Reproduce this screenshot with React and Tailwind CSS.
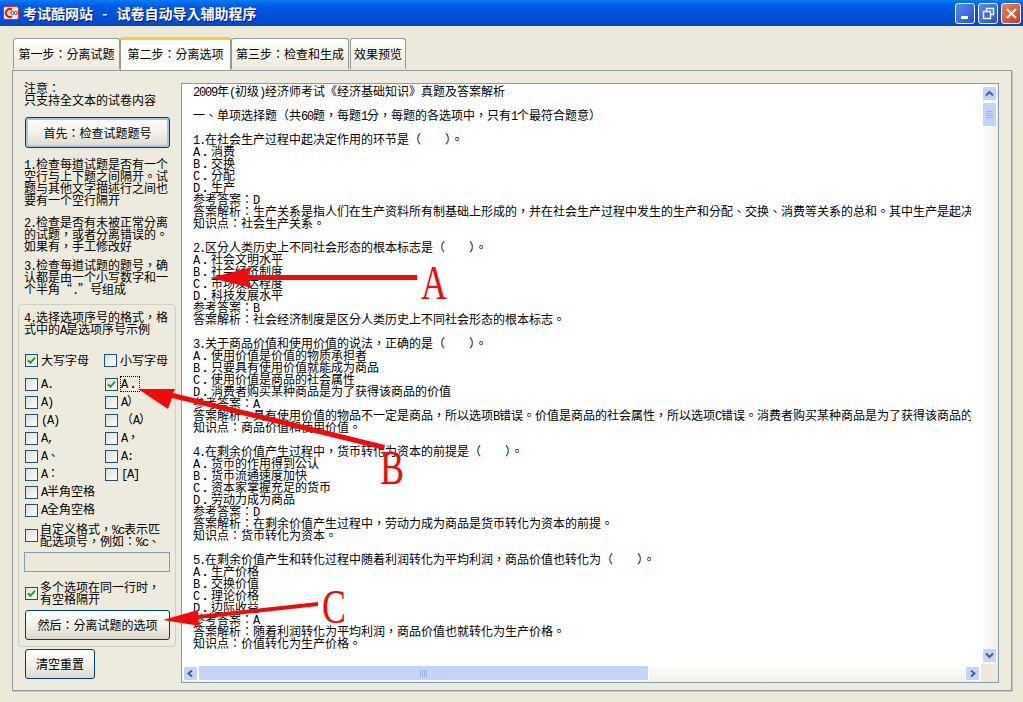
import React from "react";

const T = ({ children }) => {
  const parts = String(children).split(/([A-Za-z0-9.,:()\[\]%" -]+|\uFF0E)/);
  return (
    <>
      {parts.map((p, i) =>
        i % 2 === 0 ? (
          p
        ) : p === "\uFF0E" ? (
          <span key={i} className="inline-block w-[12px] text-center font-['Liberation_Mono',monospace] text-[12px] font-bold">.</span>
        ) : (
          <span key={i} className="font-['Liberation_Mono',monospace] text-[12px] tracking-[-1.2px]">{p}</span>
        )
      )}
    </>
  );
};

// fullwidth punctuation used by the original text
const fw = (s) =>
  s
    .replace(/^([A-D])\./, "$1\uFF0E")
    .replace(/:/g, "\uFF1A")
    .replace(/,/g, "\uFF0C")
    .replace(/\(    \)/g, "\uFF08    \uFF09");

const Lines = ({ items, className = "" }) => (
  <div className={className}>
    {items.map((l, i) => (
      <div key={i} className="h-[12px] whitespace-pre leading-[12px]">
        <T>{fw(l)}</T>
      </div>
    ))}
  </div>
);

const content = [
  "2009年(初级)经济师考试《经济基础知识》真题及答案解析",
  "",
  "一、单项选择题\uFF08共60题,每题1分,每题的各选项中,只有1个最符合题意\uFF09",
  "",
  "1.在社会生产过程中起决定作用的环节是(    )。",
  "A.消费",
  "B.交换",
  "C.分配",
  "D.生产",
  "参考答案:D",
  "答案解析:生产关系是指人们在生产资料所有制基础上形成的,并在社会生产过程中发生的生产和分配、交换、消费等关系的总和。其中生产是起决定作用的环节。",
  "知识点:社会生产关系。",
  "",
  "2.区分人类历史上不同社会形态的根本标志是(    )。",
  "A.社会文明水平",
  "B.社会经济制度",
  "C.市场发达程度",
  "D.科技发展水平",
  "参考答案:B",
  "答案解析:社会经济制度是区分人类历史上不同社会形态的根本标志。",
  "",
  "3.关于商品价值和使用价值的说法,正确的是(    )。",
  "A.使用价值是价值的物质承担者",
  "B.只要具有使用价值就能成为商品",
  "C.使用价值是商品的社会属性",
  "D.消费者购买某种商品是为了获得该商品的价值",
  "参考答案:A",
  "答案解析:具有使用价值的物品不一定是商品,所以选项B错误。价值是商品的社会属性,所以选项C错误。消费者购买某种商品是为了获得该商品的使用价值。",
  "知识点:商品价值和使用价值。",
  "",
  "4.在剩余价值产生过程中,货币转化为资本的前提是(    )。",
  "A.货币的作用得到公认",
  "B.货币流通速度加快",
  "C.资本家掌握充足的货币",
  "D.劳动力成为商品",
  "参考答案:D",
  "答案解析:在剩余价值产生过程中,劳动力成为商品是货币转化为资本的前提。",
  "知识点:货币转化为资本。",
  "",
  "5.在剩余价值产生和转化过程中随着利润转化为平均利润,商品价值也转化为(    )。",
  "A.生产价格",
  "B.交换价值",
  "C.理论价格",
  "D.边际收益",
  "参考答案:A",
  "答案解析:随着利润转化为平均利润,商品价值也就转化为生产价格。",
  "知识点:价值转化为生产价格。",
];

const Box = ({ checked }) => (
  <span className="flex h-[13px] w-[13px] shrink-0 items-center justify-center border border-[#1c5180] bg-gradient-to-br from-[#dcdcd7] to-white">
    {checked && (
      <svg width="9" height="9" viewBox="0 0 9 9">
        <path d="M1 4.2 L3.5 6.8 L8 1.6" fill="none" stroke="#21a121" strokeWidth="2" />
      </svg>
    )}
  </span>
);

const Check = ({ label, checked, focus }) => (
  <div className="flex h-[18px] items-center gap-[2px]">
    <Box checked={checked} />
    <span className={focus ? "border border-dotted border-black leading-[12px]" : "pl-px leading-[12px]"}>
      <T>{label}</T>
    </span>
  </div>
);

const XpButton = ({ children, className = "" }) => (
  <div
    className={
      "flex items-center justify-center rounded-[3px] border border-[#003c74] bg-gradient-to-b from-white via-[#f2f1ea] to-[#dcd8cc] " +
      className
    }
  >
    {children}
  </div>
);

const Tab = ({ children, active, className = "" }) =>
  active ? (
    <div
      className={
        "relative z-10 -mb-px flex h-[33px] items-center justify-center rounded-t-[3px] border-x border-[#919b9c] border-t-[3px] border-t-[#ffc73c] bg-[#fcfcfa] pb-[3px] " +
        className
      }
    >
      {children}
    </div>
  ) : (
    <div
      className={
        "mt-px flex h-[31px] items-center justify-center rounded-t-[3px] border-x border-t border-[#919b9c] bg-gradient-to-b from-white to-[#ece9d8] " +
        className
      }
    >
      {children}
    </div>
  );

const ScrollBtn = ({ d, className = "" }) => (
  <div
    className={
      "flex h-[15px] w-[15px] shrink-0 items-center justify-center rounded-[2px] border border-white bg-[#c3d3fa] " +
      className
    }
  >
    <svg width="9" height="7" viewBox="0 0 9 7">
      <path d={d} fill="none" stroke="#4d6185" strokeWidth="2" />
    </svg>
  </div>
);

const WinBtn = ({ className = "", children }) => (
  <div
    className={
      "flex h-[21px] w-[20px] items-center justify-center rounded-[3px] border border-white " + className
    }
  >
    <svg width="15" height="15" viewBox="0 0 15 15">{children}</svg>
  </div>
);

export default function App() {
  return (
    <div className="relative flex h-[702px] w-[1023px] flex-col overflow-hidden bg-[#ece9d8] font-['Noto_Sans_CJK_TC','Noto_Sans_CJK_SC',sans-serif] text-[12px] leading-[12px] text-black">
      {/* title bar */}
      <div className="flex h-[26px] shrink-0 items-center bg-gradient-to-b from-[#0a7cf2] via-[#0058e6] via-25% to-[#0348c8] pl-[3px] pr-[2px]">
        <svg width="16" height="16" viewBox="0 0 16 16" className="mr-[4px] shrink-0">
          <rect x="0.5" y="1.5" width="15" height="13" rx="2" fill="#f3e6dc" stroke="#c9342a" />
          <path d="M9 4.6A4 4 0 1 0 9 11.4" fill="none" stroke="#d6201c" strokeWidth="2" />
          <circle cx="9.5" cy="8" r="1.6" fill="none" stroke="#7a4a4a" strokeWidth="1" />
          <circle cx="12.8" cy="8" r="1.6" fill="none" stroke="#7a4a4a" strokeWidth="1" />
        </svg>
        <span className="whitespace-pre text-[14px] font-bold text-white [text-shadow:1px_1px_#0f1089]">
          考试酷网站 <span className="mx-[6px]">-</span> 试卷自动导入辅助程序
        </span>
        <div className="ml-auto flex gap-[3px]">
          <WinBtn className="bg-gradient-to-br from-[#5a8af0] to-[#2a50d0]">
            <rect x="3" y="10" width="7" height="3" fill="white" />
          </WinBtn>
          <WinBtn className="bg-gradient-to-br from-[#5a8af0] to-[#2a50d0]">
            <path d="M5.5 5.5V2.5H12.5V8.5H10M2.5 5.5H9.5V12.5H2.5Z" fill="none" stroke="white" strokeWidth="1.4" />
          </WinBtn>
          <WinBtn className="bg-gradient-to-br from-[#e8835f] to-[#c63a18]">
            <path d="M3 3L12 12M12 3L3 12" stroke="white" strokeWidth="2" />
          </WinBtn>
        </div>
      </div>

      {/* client */}
      <div className="flex flex-1 flex-col pl-[12px] pr-[11px] pt-[11px]">
        <div className="flex h-[33px] shrink-0 items-start pl-px">
          <Tab className="w-[107px]">第一步{"\uFF1A"}分离试题</Tab>
          <Tab active className="w-[111px]">第二步{"\uFF1A"}分离选项</Tab>
          <Tab className="w-[118px]">第三步{"\uFF1A"}检查和生成</Tab>
          <Tab className="ml-px w-[56px]">效果预览</Tab>
        </div>

        {/* panel */}
        <div className="mb-[11px] flex flex-1 border border-[#919b9c] bg-[#edebdd] pl-[5px] shadow-[1px_1px_0_#c9c7b8]">
          {/* sidebar */}
          <div className="flex w-[158px] shrink-0 flex-col pt-[11px]">
            <Lines className="ml-[6px]" items={["注意:", "只支持全文本的试卷内容"]} />
            <XpButton className="ml-[7px] mt-[11px] h-[31px] w-[145px] shadow-[inset_0_0_0_2px_#a9c4ea]">
              首先{"\uFF1A"}检查试题题号
            </XpButton>
            <Lines
              className="ml-[6px] mt-[10px]"
              items={["1.检查每道试题是否有一个", "空行与上下题之间隔开。试", "题与其他文字描述行之间也", "要有一个空行隔开"]}
            />
            <Lines
              className="ml-[6px] mt-[10px]"
              items={["2.检查是否有未被正常分离", "的试题,或者分离错误的。", "如果有,手工修改好"]}
            />
            <Lines
              className="ml-[6px] mt-[7px]"
              items={["3.检查每道试题的题号,确", "认都是由一个小写数字和一", "个半角“.”号组成"]}
            />

            {/* group */}
            <div className="mt-[9px] flex flex-col rounded-[4px] border border-[#d0d0bf] pb-[6px] pl-[5px] pr-[5px] pt-[6px]">
              <Lines items={["4.选择选项序号的格式,格", "式中的A是选项序号示例"]} />
              <div className="mt-[16px] grid grid-cols-[79px_1fr] pl-px">
                <Check label="大写字母" checked />
                <Check label="小写字母" />
              </div>
              <div className="mt-[6px] grid grid-cols-[80px_1fr] pl-px">
                <Check label="A." />
                <Check label={"A\uFF0E"} checked focus />
                <Check label="A)" />
                <Check label={"A\uFF09"} />
                <Check label="(A)" />
                <Check label={"\uFF08A\uFF09"} />
                <Check label="A," />
                <Check label={"A\uFF0C"} />
                <Check label="A、" />
                <Check label="A:" />
                <Check label={"A\uFF1A"} />
                <Check label="[A]" />
                <div className="col-span-2"><Check label="A半角空格" /></div>
                <div className="col-span-2"><Check label="A全角空格" /></div>
              </div>
              <div className="mt-[4px] flex items-center gap-[2px] pl-px">
                <Box />
                <Lines items={["自定义格式,%c表示匹", "配选项号,例如:%c、"]} />
              </div>
              <div className="mt-[5px] h-[20px] w-[146px] border border-[#7f9db9] bg-[#ece9d8]" />
              <div className="mt-[9px] flex items-center gap-[2px] pl-px">
                <Box checked />
                <Lines items={["多个选项在同一行时,", "有空格隔开"]} />
              </div>
              <XpButton className="ml-px mt-[5px] h-[30px] w-[145px]">然后{"\uFF1A"}分离试题的选项</XpButton>
            </div>

            <XpButton className="ml-[7px] mt-[2px] h-[30px] w-[70px]">清空重置</XpButton>
          </div>

          {/* editor */}
          <div className="ml-[5px] mt-[12px] flex h-[600px] w-[818px] flex-col border border-[#7f9db9] bg-white">
            <div className="flex min-h-0 flex-1">
              <div className="min-w-0 flex-1 pl-[11px] pt-[1px]">
                <Lines className="w-[778px] overflow-hidden" items={content} />
              </div>
              <div className="flex w-[17px] shrink-0 flex-col items-center bg-gradient-to-r from-white to-[#f1efe6] pt-[2px]">
                <ScrollBtn d="M1 5.5L4.5 2L8 5.5" />
                <div className="mt-[1px] flex h-[25px] w-[15px] flex-col items-center justify-center gap-px rounded-[2px] border border-white bg-[#c3d3fa]">
                  <span className="h-px w-[7px] bg-[#9fb4e6]" />
                  <span className="h-px w-[7px] bg-[#9fb4e6]" />
                  <span className="h-px w-[7px] bg-[#9fb4e6]" />
                  <span className="h-px w-[7px] bg-[#9fb4e6]" />
                </div>
                <ScrollBtn d="M1 1.5L4.5 5L8 1.5" className="mb-[1px] mt-auto" />
              </div>
            </div>
            <div className="flex h-[18px] shrink-0">
              <div className="flex flex-1 items-center bg-gradient-to-b from-white to-[#f1efe6] pl-[1px] pr-[1px]">
                <ScrollBtn d="M6 0.5L2.5 3.5L6 6.5" />
                <div className="flex h-[16px] w-[451px] items-center justify-center gap-px rounded-[2px] border border-white bg-[#c3d3fa]">
                  <span className="h-[7px] w-px bg-[#9fb4e6]" />
                  <span className="h-[7px] w-px bg-[#9fb4e6]" />
                  <span className="h-[7px] w-px bg-[#9fb4e6]" />
                  <span className="h-[7px] w-px bg-[#9fb4e6]" />
                </div>
                <ScrollBtn d="M3 0.5L6.5 3.5L3 6.5" className="ml-auto" />
              </div>
              <div className="w-[17px] shrink-0 bg-[#ece9d8]" />
            </div>
          </div>
        </div>
      </div>

      {/* annotations over the screenshot */}
      <svg className="pointer-events-none absolute left-0 top-0" width="1023" height="702" viewBox="0 0 1023 702">
        <polygon fill="#f00a0a" points="417,275 417,280 248,280 252,288 210,278 252,267 248,275" />
        <polygon fill="#f00a0a" points="385,445 384,450 172,398 168,409 138,389 175,389 173,393" />
        <polygon fill="#f00a0a" points="318,602 318,606 198,619 200,626 163,620 198,610 198,615" />
      </svg>
      <span className="absolute left-[421px] top-[259px] origin-left scale-x-[0.75] font-['Liberation_Serif',serif] text-[48px] leading-[48px] text-[#f00a0a]">A</span>
      <span className="absolute left-[380px] top-[444px] origin-left scale-x-[0.75] font-['Liberation_Serif',serif] text-[48px] leading-[48px] text-[#f00a0a]">B</span>
      <span className="absolute left-[322px] top-[583px] origin-left scale-x-[0.75] font-['Liberation_Serif',serif] text-[48px] leading-[48px] text-[#f00a0a]">C</span>
    </div>
  );
}
